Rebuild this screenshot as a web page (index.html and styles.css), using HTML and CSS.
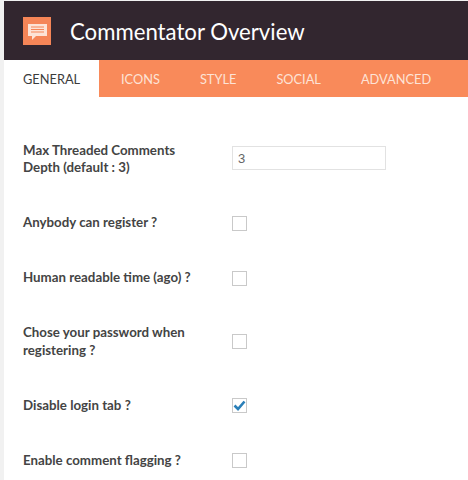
FILE: index.html
```html
<!DOCTYPE html>
<html lang="en">
<head>
    <meta charset="UTF-8">
    <meta name="viewport" content="width=device-width, initial-scale=1.0">
    <title>Commentator Overview</title>
    <link rel="stylesheet" href="styles.css">
</head>
<body>
    <div class="panel">
        <!-- Title bar -->
        <div class="header">
            <div class="logo">
                <svg width="20" height="18" viewBox="0 0 20 18">
                    <path fill="#fde3d6" d="M1 2h19v12H9l-4 4v-4H1z"/>
                    <path stroke="#f58557" stroke-width="1" d="M4 5h13M4 7.5h13M4 10h13"/>
                </svg>
            </div>
            <h1>Commentator Overview</h1>
        </div>

        <!-- Tabs -->
        <div class="tabs">
            <div class="tab active">GENERAL</div>
            <div class="tab">ICONS</div>
            <div class="tab">STYLE</div>
            <div class="tab">SOCIAL</div>
            <div class="tab">ADVANCED</div>
        </div>

        <!-- Options -->
        <div class="options">
            <div class="row">
                <label class="name">Max Threaded Comments Depth (default : 3)</label>
                <div class="field"><input class="text-input" type="text" value="3"></div>
            </div>
            <div class="row">
                <label class="name">Anybody can register ?</label>
                <div class="field"><span class="check"></span></div>
            </div>
            <div class="row">
                <label class="name">Human readable time (ago) ?</label>
                <div class="field"><span class="check"></span></div>
            </div>
            <div class="row">
                <label class="name">Chose your password when registering ?</label>
                <div class="field"><span class="check"></span></div>
            </div>
            <div class="row">
                <label class="name">Disable login tab ?</label>
                <div class="field">
                    <span class="check">
                        <svg width="13" height="11" viewBox="0 0 13 11">
                            <path fill="none" stroke="#2a7fb8" stroke-width="2.6" d="M1.5 5.5l3.5 3.5 6.5-7.5"/>
                        </svg>
                    </span>
                </div>
            </div>
            <div class="row">
                <label class="name">Enable comment flagging ?</label>
                <div class="field"><span class="check"></span></div>
            </div>
        </div>
    </div>
</body>
</html>
```

FILE: styles.css
```css
html, body {
    height: 100%;
}
body {
    margin: 0;
    padding: 1px 0 0 4px;
    box-sizing: border-box;
    background: #f1f1f1;
    font-family: Lato, "Open Sans", sans-serif;
    overflow: hidden;
}
.panel {
    background: white;
    min-height: 479px;
}
.header {
    height: 59px;
    background: #32262f;
    display: flex;
    align-items: center;
    padding-left: 19px;
    box-sizing: border-box;
}
.logo {
    width: 28px;
    height: 28px;
    background: #f58557;
    display: flex;
    align-items: center;
    justify-content: center;
}
h1 {
    margin: 2px 0 0 19px;
    color: white;
    font-size: 22.2px;
    font-weight: 400;
    line-height: 28px;
}
.tabs {
    display: flex;
    height: 37px;
    background: #f98a5a;
}
.tab {
    padding: 2px 20px 0;
    line-height: 35px;
    font-size: 12.8px;
    color: #fde3d6;
}
.tab.active {
    width: 95px;
    box-sizing: border-box;
    margin-right: 2px;
    padding: 2px 0 0 19px;
    background: white;
    color: #3c3c3c;
}
.options {
    padding: 26.4px 0 0 19px;
}
.row {
    display: flex;
    align-items: center;
    padding: 18.5px 0 19px;
}
.name {
    width: 209px;
    padding-right: 40px;
    box-sizing: border-box;
    font-size: 13.3px;
    font-weight: 700;
    line-height: 17.5px;
    color: #444;
}
.field {
    display: flex;
}
.text-input {
    width: 154px;
    height: 24px;
    margin-bottom: 2px;
    box-sizing: border-box;
    border: 1px solid #e2e2e2;
    padding: 0 5px;
    font-family: "Liberation Sans", sans-serif;
    font-size: 13px;
    color: #666;
}
.check {
    width: 15px;
    height: 15px;
    box-sizing: border-box;
    border: 1px solid #c9c9c9;
    display: flex;
    align-items: center;
    justify-content: center;
}
```
